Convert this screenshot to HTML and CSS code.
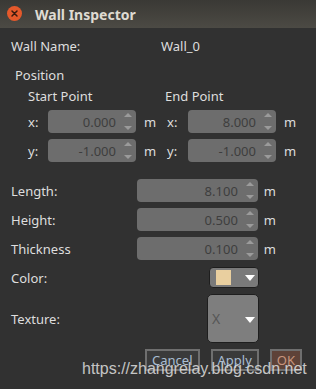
FILE: index.html
```html
<!DOCTYPE html>
<html lang="en">
<head>
    <meta charset="UTF-8">
    <title>Wall Inspector</title>
    <link rel="stylesheet" href="styles.css">
</head>
<body>
    <div class="window">
        <div class="titlebar">
            <span class="close">
                <svg width="15" height="15" viewBox="0 0 15 15">
                    <circle cx="7.5" cy="7.5" r="7.5" fill="#e5592b"/>
                    <path d="M5 5 L10 10 M10 5 L5 10" stroke="#3a1a0e" stroke-width="1.5" stroke-linecap="round"/>
                </svg>
            </span>
            <span class="title">Wall Inspector</span>
        </div>

        <div class="content">
            <div class="name-row">
                <span class="name-label">Wall Name:</span>
                <span>Wall_0</span>
            </div>

            <div class="section-title">Position</div>

            <div class="points">
                <div class="point">
                    <div class="point-title">Start Point</div>
                    <div class="coord">
                        <span class="axis">x:</span>
                        <div class="spin"><span class="spin-value">0.000</span><span class="arrows"></span></div>
                        <span class="unit">m</span>
                    </div>
                    <div class="coord">
                        <span class="axis">y:</span>
                        <div class="spin"><span class="spin-value">-1.000</span><span class="arrows"></span></div>
                        <span class="unit">m</span>
                    </div>
                </div>
                <div class="point end">
                    <div class="point-title">End Point</div>
                    <div class="coord">
                        <span class="axis">x:</span>
                        <div class="spin"><span class="spin-value">8.000</span><span class="arrows"></span></div>
                        <span class="unit">m</span>
                    </div>
                    <div class="coord">
                        <span class="axis">y:</span>
                        <div class="spin"><span class="spin-value">-1.000</span><span class="arrows"></span></div>
                        <span class="unit">m</span>
                    </div>
                </div>
            </div>

            <div class="fields">
                <div class="field">
                    <span class="field-label">Length:</span>
                    <div class="spin wide"><span class="spin-value">8.100</span><span class="arrows"></span></div>
                    <span class="unit">m</span>
                </div>
                <div class="field">
                    <span class="field-label">Height:</span>
                    <div class="spin wide"><span class="spin-value">0.500</span><span class="arrows"></span></div>
                    <span class="unit">m</span>
                </div>
                <div class="field">
                    <span class="field-label">Thickness</span>
                    <div class="spin wide"><span class="spin-value">0.100</span><span class="arrows"></span></div>
                    <span class="unit">m</span>
                </div>
                <div class="field">
                    <span class="field-label">Color:</span>
                    <div class="control">
                        <div class="color-btn">
                            <span class="swatch"></span>
                            <span class="drop"></span>
                        </div>
                    </div>
                </div>
                <div class="field texture">
                    <span class="field-label">Texture:</span>
                    <div class="control">
                        <div class="combo">
                            <span class="combo-text">X</span>
                            <span class="drop"></span>
                        </div>
                    </div>
                </div>
            </div>

            <div class="buttons">
                <button class="btn">Cancel</button>
                <button class="btn">Apply</button>
                <button class="btn ok">OK</button>
            </div>
        </div>

        <div class="watermark">https://zhangrelay.blog.csdn.net</div>
    </div>
</body>
</html>
```

FILE: styles.css
```css
body {
    margin: 0;
    padding: 0;
    background-color: #313131;
    font-family: "Noto Sans", "DejaVu Sans", sans-serif;
    font-size: 13px;
    color: #dedede;
}

.window {
    position: relative;
    width: 316px;
    height: 389px;
    overflow: hidden;
    background-color: #313131;
}

.titlebar {
    height: 28px;
    display: flex;
    align-items: center;
    background: linear-gradient(#3a3935, #4c4a44);
}

.close {
    display: flex;
    margin-left: 7px;
    margin-top: -1px;
}

.title {
    margin-left: 13px;
    font-weight: bold;
    font-size: 14px;
    color: #dfdbd2;
}

.content {
    padding: 7px 14px 0 11px;
}

.name-row {
    display: flex;
    height: 22px;
    align-items: center;
}

.name-label {
    width: 150px;
}

.section-title {
    margin-top: 9px;
    height: 18px;
    line-height: 18px;
    padding-left: 4px;
}

.points {
    display: flex;
    padding-left: 17px;
}

.point {
    width: 137px;
}

.point-title {
    margin-top: 3px;
    height: 18px;
    line-height: 18px;
    margin-bottom: 5px;
}

.coord {
    display: flex;
    align-items: center;
    height: 23px;
    margin-bottom: 6px;
}

.axis {
    width: 20px;
}

.end .axis {
    padding-left: 2px;
    width: 21px;
}

.spin {
    width: 88px;
    height: 23px;
    box-sizing: border-box;
    background-color: #6d6d6d;
    border-radius: 4px;
    display: flex;
    align-items: center;
    justify-content: flex-end;
    color: #3e3e3e;
}

.spin.wide {
    width: 121px;
    margin-left: auto;
}

.spin-value {
    margin-right: 6px;
}

.arrows {
    width: 14px;
    height: 23px;
    position: relative;
}

.arrows::before,
.arrows::after {
    content: "";
    position: absolute;
    left: 2px;
    border-left: 4px solid transparent;
    border-right: 4px solid transparent;
}

.arrows::before {
    top: 3px;
    border-bottom: 4px solid #9b9b9b;
}

.arrows::after {
    bottom: 3px;
    border-top: 4px solid #9b9b9b;
}

.unit {
    margin-left: 8px;
}

.fields {
    margin-top: 11px;
}

.field {
    display: flex;
    align-items: center;
    height: 23px;
    margin-bottom: 6px;
    width: 265px;
}

.field .unit {
    margin-left: 6px;
}

.field-label {
    width: 127px;
}

.control {
    width: 121px;
    display: flex;
    justify-content: flex-end;
}

.color-btn {
    width: 50px;
    height: 21px;
    box-sizing: border-box;
    border: 1px solid #1e1e1e;
    border-radius: 4px;
    background-color: #7a7a7a;
    display: flex;
    align-items: center;
    padding-left: 6px;
}

.swatch {
    width: 15px;
    height: 15px;
    background-color: #e9cf9f;
}

.drop {
    margin-left: auto;
    margin-right: 3px;
    border-left: 5.5px solid transparent;
    border-right: 5.5px solid transparent;
    border-top: 6px solid #ffffff;
}

.field.texture {
    height: 49px;
    margin-top: -1px;
}

.combo {
    width: 52px;
    height: 49px;
    box-sizing: border-box;
    border: 1px solid #1e1e1e;
    border-radius: 5px;
    background-color: #7e7e7e;
    display: flex;
    align-items: center;
    padding-left: 4px;
}

.combo-text {
    color: #565656;
    font-size: 14px;
}

.combo .drop {
    margin-top: 2px;
}

.buttons {
    display: flex;
    justify-content: flex-end;
    gap: 11px;
    margin-top: 3px;
}

.btn {
    height: 22px;
    padding: 0 5px;
    border: 2px solid #6f6f6f;
    background-color: #3a3a3a;
    color: #a9bdd2;
    font-family: "Noto Sans", "DejaVu Sans", sans-serif;
    font-size: 13px;
    line-height: 16px;
}

.btn.ok {
    background-color: #5e4238;
    color: #c8957e;
}

.watermark {
    position: absolute;
    left: 82px;
    top: 360px;
    font-family: "Liberation Sans", Arial, sans-serif;
    font-size: 16px;
    color: rgba(225, 225, 225, 0.85);
    white-space: nowrap;
}
```
